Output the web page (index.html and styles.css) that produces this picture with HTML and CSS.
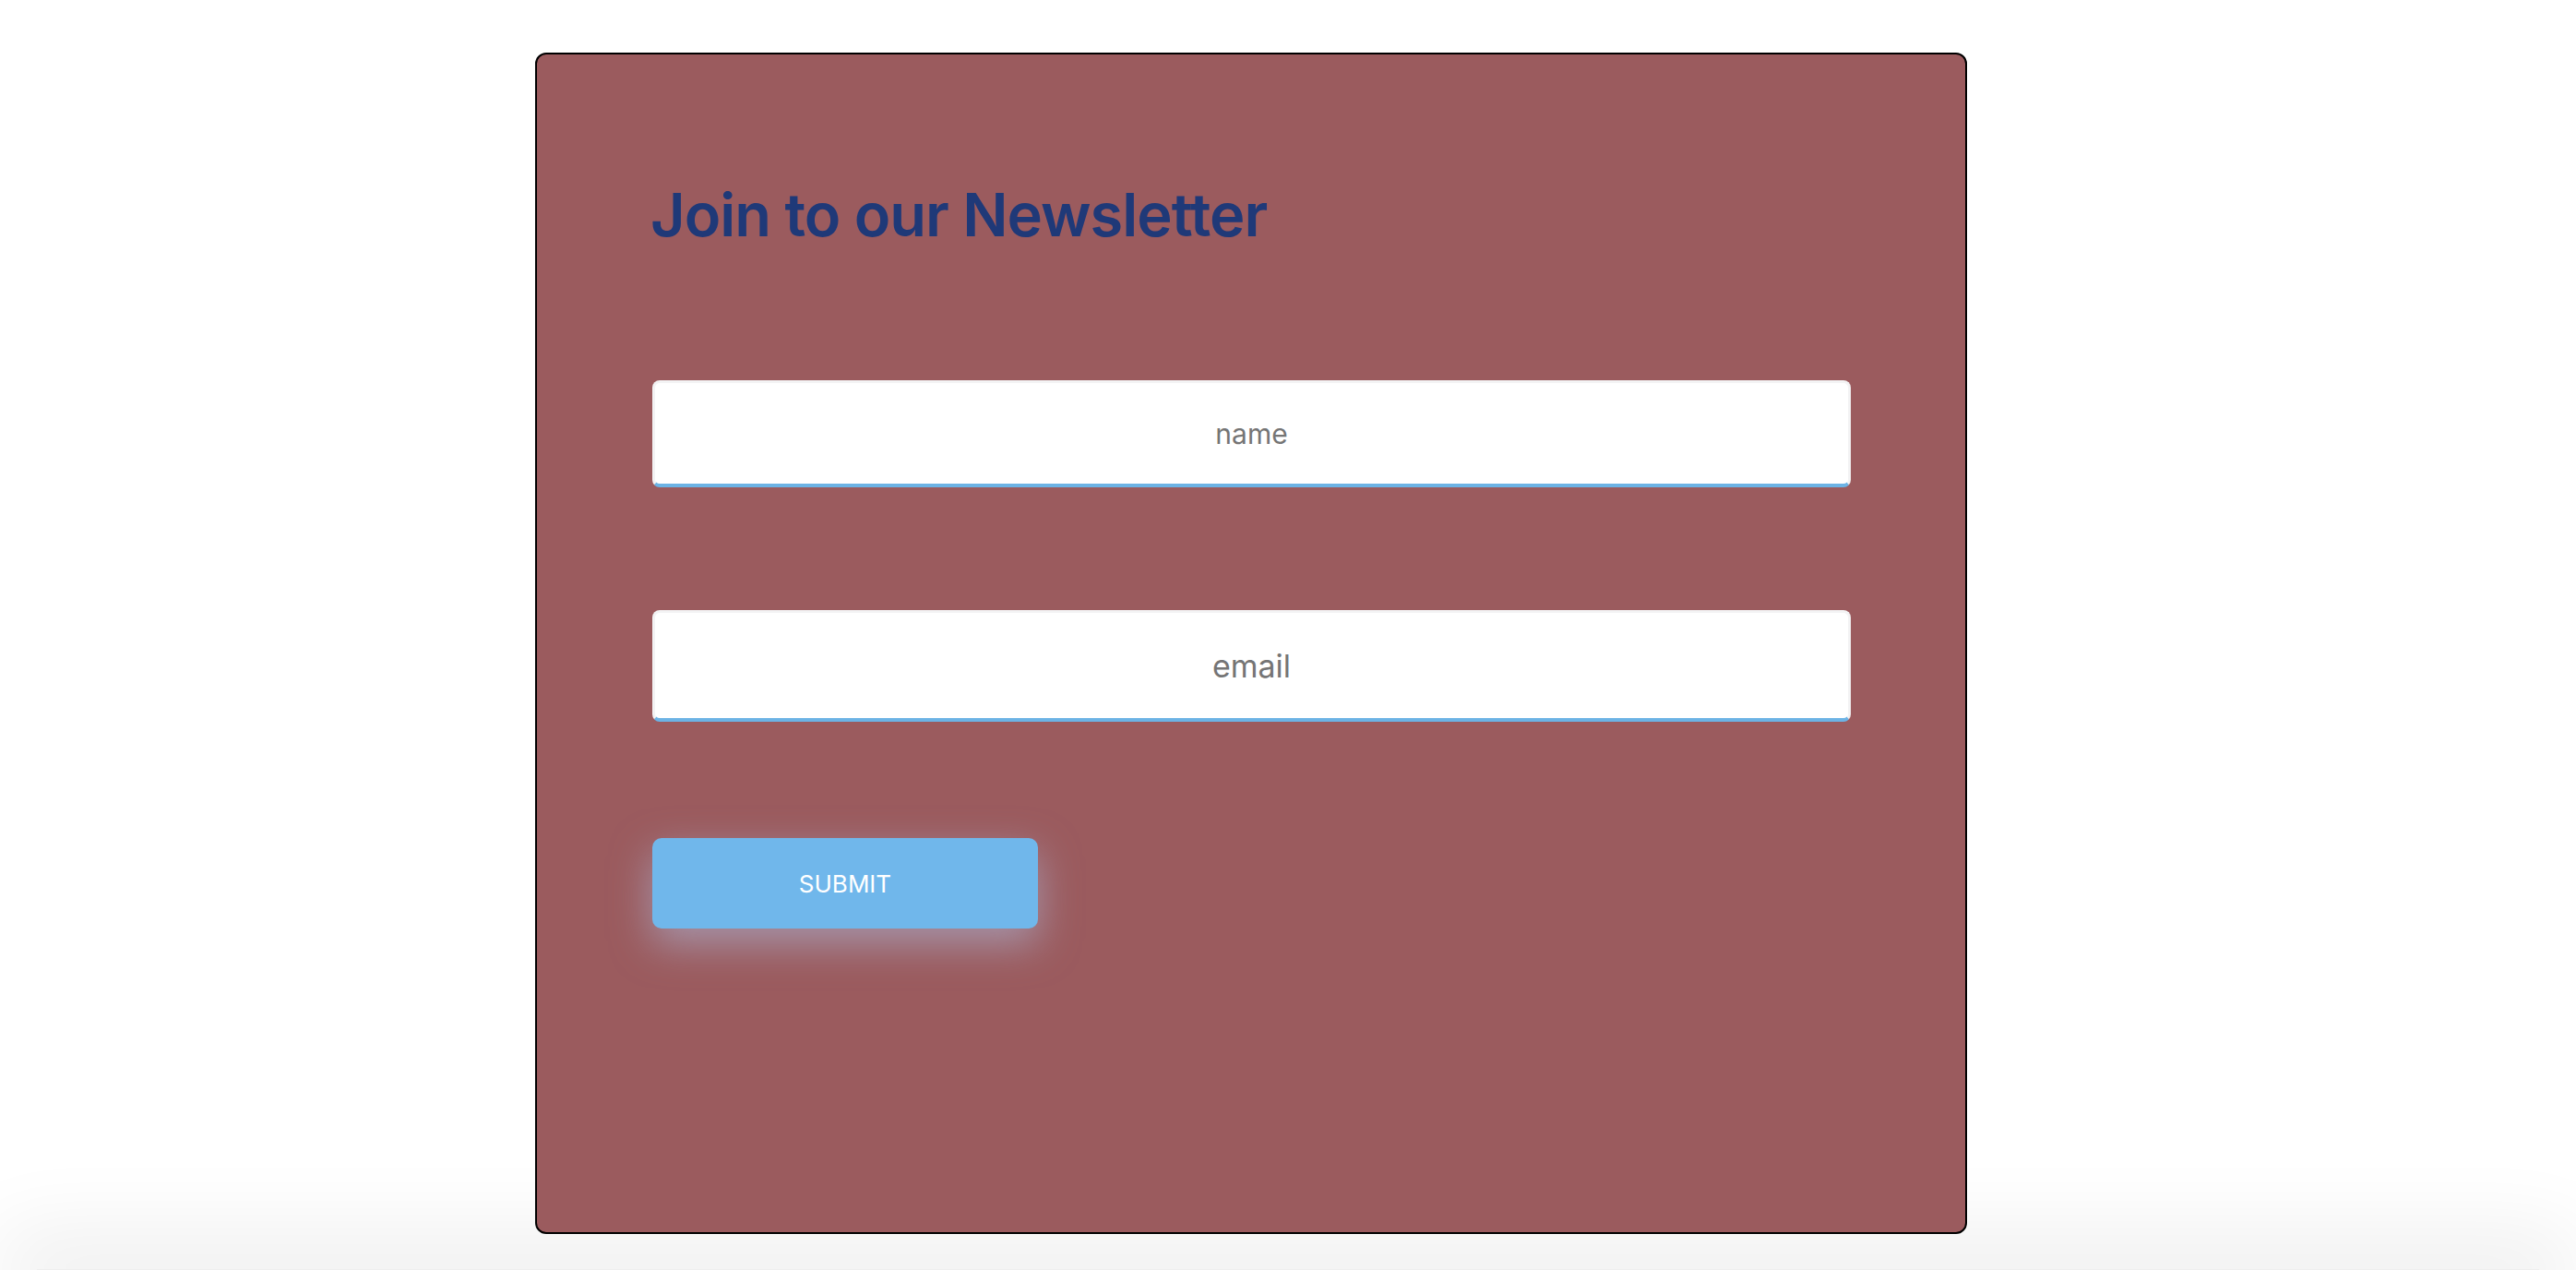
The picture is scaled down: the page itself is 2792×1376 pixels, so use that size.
FILE: index.html
```html
<!DOCTYPE html>
<html lang="en">
<head>
<meta charset="utf-8">
<title>Newsletter</title>
<link rel="stylesheet" href="styles.css">
</head>
<body>
<main class="page">
  <section class="card">
    <h1 class="title">Join to our Newsletter</h1>
    <form class="form">
      <input class="field field-name" type="text" placeholder="name">
      <input class="field field-email" type="email" placeholder="email">
      <button class="submit" type="button">SUBMIT</button>
    </form>
  </section>
</main>
<div class="floor"></div>
</body>
</html>
```

FILE: styles.css
```css
html, body {
  margin: 0;
  padding: 0;
  background: #ffffff;
  overflow: hidden;
  height: 1376px;
}
body {
  font-family: Inter, "Noto Sans", sans-serif;
}
.page {
  display: flex;
  padding-top: 57px;
  padding-left: 580px;
}
.card {
  box-sizing: border-box;
  width: 1552px;
  height: 1280px;
  background: #9b5b5e;
  border: 2px solid #000;
  border-radius: 12px;
  padding: 134px 0 0 125px;
  display: flex;
  flex-direction: column;
}
.title {
  margin: 0 0 0 -2px;
  font-size: 65px;
  font-weight: 600;
  line-height: normal;
  color: #1f3978;
  letter-spacing: -1px;
}
.form {
  display: flex;
  flex-direction: column;
  align-items: flex-start;
  margin-top: 140px;
}
.field {
  box-sizing: border-box;
  width: 1299px;
  height: 116px;
  border: 3px solid #f3f3f4;
  border-bottom: 4px solid #6cb3e5;
  border-radius: 8px;
  background: #fff;
  text-align: center;
  font-family: Inter, "Noto Sans", sans-serif;
  color: #555;
  outline: none;
  padding: 0;
}
.field::placeholder {
  color: #757575;
}
.field-name {
  font-size: 30px;
}
.field-email {
  font-size: 34px;
  height: 121px;
  margin-top: 133px;
}
.submit {
  margin-top: 126px;
  width: 418px;
  height: 98px;
  border: none;
  border-radius: 10px;
  background: #70b7eb;
  color: #fff;
  font-family: Inter, "Noto Sans", sans-serif;
  font-size: 26px;
  box-shadow: 0 16px 44px rgba(170, 180, 210, 0.65);
  padding: 0;
}
.floor {
  margin: 38px 40px 0 40px;
  height: 1px;
  background: #eee;
  box-shadow: 0 0 90px 40px rgba(0, 0, 0, 0.07);
}
```
